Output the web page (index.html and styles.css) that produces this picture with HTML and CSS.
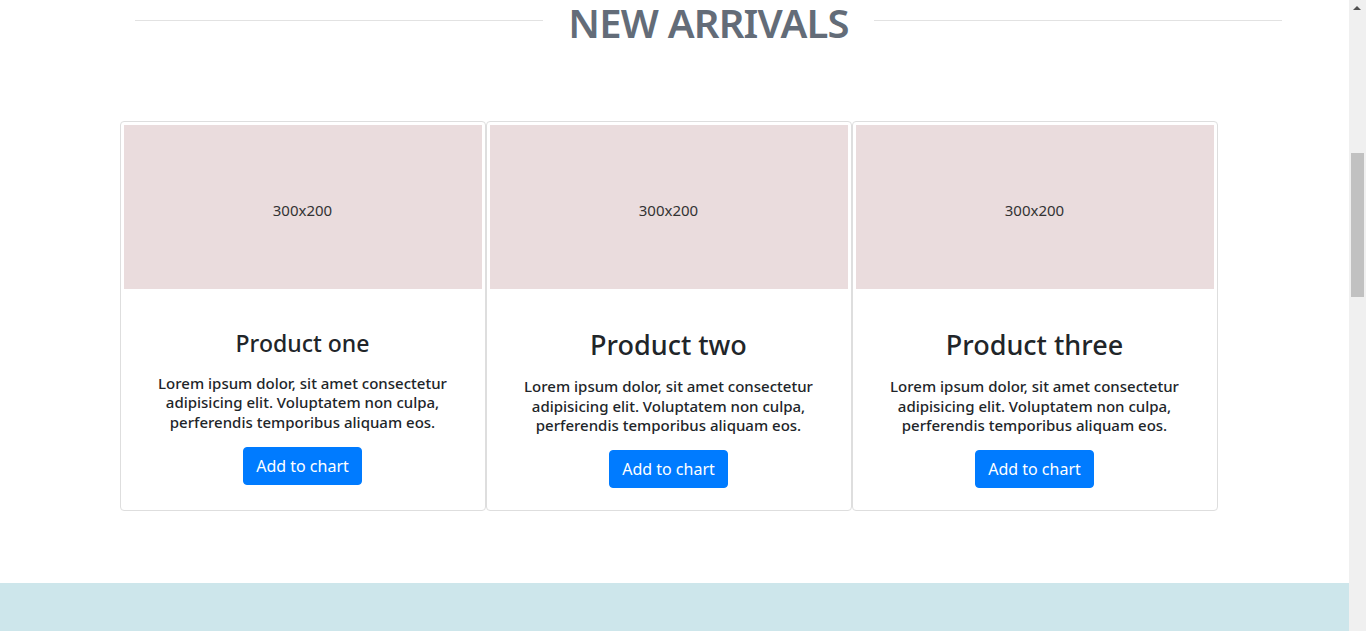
FILE: index.html
```html
<!DOCTYPE html>
<html lang="en">
<head>
<meta charset="utf-8">
<title>New Arrivals</title>
<link rel="stylesheet" href="styles.css">
</head>
<body>
<section class="arrivals">
  <div class="heading-row">
    <span class="rule"></span>
    <h2 class="heading">NEW ARRIVALS</h2>
    <span class="rule"></span>
  </div>
  <div class="container">
    <div class="cards">
      <div class="card">
        <div class="thumb">300x200</div>
        <div class="card-body">
          <h4 class="title title-sm">Product one</h4>
          <p class="text">Lorem ipsum dolor, sit amet consectetur adipisicing elit. Voluptatem non culpa, perferendis temporibus aliquam eos.</p>
          <button class="btn">Add to chart</button>
        </div>
      </div>
      <div class="card">
        <div class="thumb">300x200</div>
        <div class="card-body">
          <h3 class="title">Product two</h3>
          <p class="text">Lorem ipsum dolor, sit amet consectetur adipisicing elit. Voluptatem non culpa, perferendis temporibus aliquam eos.</p>
          <button class="btn">Add to chart</button>
        </div>
      </div>
      <div class="card">
        <div class="thumb">300x200</div>
        <div class="card-body">
          <h3 class="title">Product three</h3>
          <p class="text">Lorem ipsum dolor, sit amet consectetur adipisicing elit. Voluptatem non culpa, perferendis temporibus aliquam eos.</p>
          <button class="btn">Add to chart</button>
        </div>
      </div>
    </div>
  </div>
</section>
<section class="band"></section>
<div class="scrollbar" aria-hidden="true">
  <span class="arrow-up"></span>
  <span class="thumb-bar"></span>
</div>
</body>
</html>
```
FILE: styles.css
```css
html, body {
  margin: 0;
  padding: 0;
}
body {
  font-family: "Noto Sans", "Open Sans", sans-serif;
  color: #212529;
  background: #fff;
  margin-right: 17px;
}
.arrivals {
  padding-bottom: 72px;
}
.heading-row {
  display: flex;
  align-items: flex-start;
  gap: 25px;
  width: 1147px;
  margin-left: 135px;
  height: 40px;
}
.rule {
  flex: 1;
  height: 1px;
  margin-top: 20px;
  background: #e2e2e2;
}
.heading {
  margin: 0;
  padding-top: 3px;
  font-size: 40px;
  font-weight: 600;
  line-height: 40px;
  color: #636c78;
  letter-spacing: -0.8px;
}
.container {
  max-width: 1110px;
  margin: 81px auto 0;
}
.cards {
  display: flex;
  align-items: stretch;
}
.card {
  width: 366px;
  box-sizing: border-box;
  border: 1px solid #dedede;
  border-radius: 4px;
  padding: 2px 3px 0;
  display: flex;
  flex-direction: column;
}
.thumb {
  height: 164px;
  margin-top: 1px;
  box-sizing: border-box;
  padding-top: 6px;
  background: #eadcdd;
  display: flex;
  align-items: center;
  justify-content: center;
  font-size: 15px;
  color: #333;
}
.card-body {
  padding: 40px 20px 22px;
  text-align: center;
}
.title {
  margin: 0 0 16px;
  font-size: 27px;
  font-weight: 500;
  line-height: 1.2;
}
.title-sm {
  font-size: 23px;
  margin-top: 1px;
}
.text {
  margin: 0 0 15px;
  font-size: 15px;
  line-height: 19.5px;
  font-weight: 500;
}
.btn {
  font-family: inherit;
  font-size: 16px;
  line-height: 22px;
  padding: 7px 12px;
  color: #fff;
  background: #007bff;
  border: 1px solid #007bff;
  border-radius: 4px;
}
.card:nth-child(n+2) .btn {
  margin-top: -1px;
}
.band {
  height: 2000px;
  background: #cde6eb;
}
.scrollbar {
  position: fixed;
  top: 0;
  right: 0;
  width: 17px;
  height: 100vh;
  background: #f0f0f0;
}
.arrow-up {
  position: absolute;
  top: 6px;
  left: 4px;
  width: 0;
  height: 0;
  border-left: 4px solid transparent;
  border-right: 4px solid transparent;
  border-bottom: 4px solid #505050;
}
.thumb-bar {
  position: absolute;
  top: 153px;
  left: 2px;
  width: 13px;
  height: 144px;
  background: #c1c1c1;
}
```
